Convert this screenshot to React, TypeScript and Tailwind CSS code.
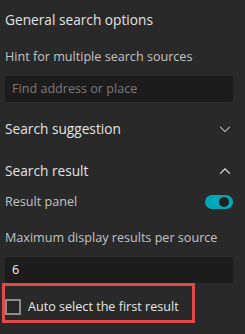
import React from "react";

function ChevronDown() {
  return (
    <svg className="w-[14px] h-[14px] text-[#bdbdbd]" viewBox="0 0 16 16" fill="none" stroke="currentColor">
      <path d="M2.5 5.5l5.5 5.5 5.5-5.5" strokeWidth={1.2} />
    </svg>
  );
}

function ChevronUp() {
  return (
    <svg className="w-[14px] h-[14px] text-[#e6e6e6]" viewBox="0 0 16 16" fill="none" stroke="currentColor">
      <path d="M2.5 11l5.5-5.5 5.5 5.5" strokeWidth={1.4} />
    </svg>
  );
}

export default function App() {
  return (
    <div
      className="w-[245px] h-[334px] overflow-hidden bg-[#292929] px-[5px] pt-[10px]"
      style={{ fontFamily: '"Open Sans", "Noto Sans", sans-serif' }}
    >
      <div className="h-[20px] leading-[20px] text-[13.7px] text-[#e3e3e3]">General search options</div>

      <div className="mt-[17px] h-[20px] leading-[20px] text-[12.6px] text-[#c4c4c4]">
        Hint for multiple search sources
      </div>
      <div className="mt-[9px] h-[26px] w-[228px] bg-[#1c1c1c] rounded-[2px] flex items-center px-[7px] text-[12.6px] text-[#7a7a7a]">
        Find address or place
      </div>

      <div className="mt-[17px] h-[20px] flex items-center justify-between pr-[8px]">
        <span className="text-[13.7px] leading-[20px] text-[#e3e3e3]">Search suggestion</span>
        <ChevronDown />
      </div>

      <div className="mt-[22px] h-[20px] flex items-center justify-between pr-[8px]">
        <span className="text-[13.7px] leading-[20px] text-[#e3e3e3]">Search result</span>
        <ChevronUp />
      </div>

      <div className="mt-[11px] h-[20px] flex items-center justify-between w-[228px]">
        <span className="text-[12.6px] leading-[20px] text-[#c4c4c4]">Result panel</span>
        <div className="w-[28px] h-[14px] rounded-full bg-[#00a8b7] flex items-center justify-end pr-[4px]">
          <div className="w-[10px] h-[10px] rounded-full bg-[#1f1f1f]" />
        </div>
      </div>

      <div className="mt-[16px] h-[20px] leading-[20px] text-[12.6px] text-[#c4c4c4]">
        Maximum display results per source
      </div>
      <div className="mt-[9px] h-[26px] w-[228px] bg-[#1c1c1c] rounded-[2px] flex items-center px-[7px] text-[12.6px] text-[#f0f0f0]">
        6
      </div>

      <div className="ml-[-3px] w-[193px] h-[40px] border-[3px] border-[#e24a4a] flex items-end pb-[5px]">
        <div className="flex items-center gap-[7px]">
          <div className="w-[16px] h-[16px] border-2 border-[#8c8c8c] bg-[#262626]" />
          <span className="text-[12.6px] leading-[16px] text-[#e6e6e6]">Auto select the first result</span>
        </div>
      </div>
    </div>
  );
}
